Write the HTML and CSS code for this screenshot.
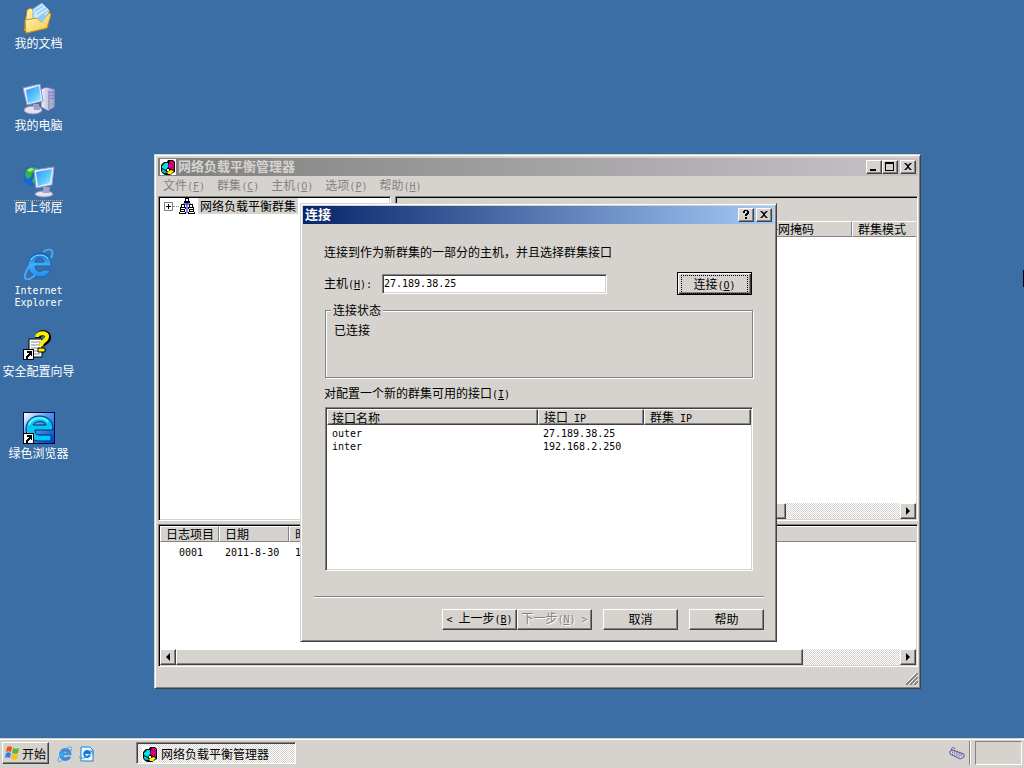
FILE: index.html
```html
<!DOCTYPE html>
<html lang="zh-CN">
<head>
<meta charset="utf-8">
<title>网络负载平衡管理器</title>
<link rel="stylesheet" href="styles.css">
</head>
<body>
<svg class="defs" aria-hidden="true">
  <defs>
    <linearGradient id="screen" x1="0" y1="0" x2="1" y2="1"><stop offset="0" stop-color="#2a94f4"/><stop offset=".6" stop-color="#62c8ff"/><stop offset="1" stop-color="#a8f0ff"/></linearGradient>
    <linearGradient id="folder" x1="0" y1="0" x2="1" y2="1"><stop offset="0" stop-color="#fff8b8"/><stop offset="1" stop-color="#f4c840"/></linearGradient>
    <linearGradient id="ieblue" x1="0" y1="0" x2="0" y2="1"><stop offset="0" stop-color="#1468c8"/><stop offset=".5" stop-color="#40b0f8"/><stop offset="1" stop-color="#1c8cf0"/></linearGradient>
    <linearGradient id="tile" x1="0" y1="0" x2="1" y2="1"><stop offset="0" stop-color="#ffffff"/><stop offset=".4" stop-color="#58a0f0"/><stop offset="1" stop-color="#0040c8"/></linearGradient>
    <linearGradient id="metal" x1="0" y1="0" x2="1" y2="0"><stop offset="0" stop-color="#f0f0fa"/><stop offset="1" stop-color="#9898d0"/></linearGradient>
    <symbol id="nlb" viewBox="0 0 16 16">
      <rect width="16" height="16" fill="#fff"/>
      <path d="M8 1h5l2 2v10l-2 1-3 2H5l-3-2-1-2V6l3-3h3z" fill="#000"/>
      <path d="M2 7l3-3h3v4L6 11 2 9z" fill="#00e4e8"/>
      <path d="M2 10l4 2 1 2H4l-2-1z" fill="#00c0c8"/>
      <path d="M9 4l1-2h3l1 2v7l-3-1-3-2z" fill="#e80078"/>
      <path d="M7 13l4-2 3 1-3 3H8z" fill="#fff000"/>
      <path d="M7 10h2v2H7z" fill="#fff"/>
      <path d="M10 4l1 1m1 0l1 1m-3 1l1 1m1 0l1 1" stroke="#700060"/>
    </symbol>
    <symbol id="ie" viewBox="0 0 32 32">
      <path d="M28 18C29 9 23 5 17 5 9 5 5 11 5 17c0 7 5 12 12 12 5 0 9-3 10-7h-7c-3 3-8 1-8-4zM12 14c1-5 8-5 9 0z" fill="url(#ieblue)" stroke="#2060a8" fill-rule="evenodd"/>
      <path d="M8 12c3-6 13-7 17-1" fill="none" stroke="#a0e0ff" stroke-width="1"/>
      <path d="M6 18C3 24 0 29 3 31c3 1 7-2 9-4M20 4c4-3 8-3 9-1 1 2 0 5-1 7" fill="none" stroke="#48a8f0" stroke-width="2"/>
    </symbol>
    <symbol id="shortcut" viewBox="0 0 11 11">
      <path d="M0 0h11v11H0z" fill="#000"/><path d="M1 1h9v9H1z" fill="#fff"/>
      <path d="M4 2h5v5H8V6H7v1H6v1H5v2H3V7h1V6h1V5h1V4H4z" fill="#000"/>
    </symbol>
  </defs>
</svg>

<main class="desktop">
  <nav class="icons">
    <a class="shortcut" href="#">
      <svg viewBox="0 0 32 32"><path d="M4 8l3-2 5 2v4L25 8l2 4-3 14-20 5-3-3z" fill="url(#folder)" stroke="#b07810"/><path d="M10 7l9-6 7 7v10l-8 7-8-9z" fill="#c8e8fc" stroke="#78b0e0"/><path d="M12 9l8-5m-6 8l9-6m-7 9l9-6" stroke="#80bce8"/><path d="M2 18l12-2 4 4 8-9 2 1-4 14-21 5z" fill="url(#folder)" stroke="#c89020"/><path d="M14 16l5 5 4-6-2-4z" fill="#90ccf4"/></svg>
      <span>我的文档</span>
    </a>
    <a class="shortcut" href="#">
      <svg viewBox="0 0 32 32"><path d="M18 5l5-2 9 2v18l-7 4-7-4z" fill="url(#metal)" stroke="#6868a8"/><path d="M26 7v18M27 9l4-1m-4 4l4-1m-4 4l4-1" stroke="#7878b8"/><path d="M28 19h2v2h-2z" fill="#60e040"/><ellipse cx="10" cy="26" rx="9" ry="4" fill="#e4e4f0" stroke="#9090b8"/><path d="M10 20h6l1 6h-6z" fill="#a0a0cc"/><path d="M0 4l17-4 3 17L4 21z" fill="#e8ecf8" stroke="#8898c8"/><path d="M3 6l13-4 2 14L5 19z" fill="url(#screen)"/></svg>
      <span>我的电脑</span>
    </a>
    <a class="shortcut focus" href="#">
      <svg viewBox="0 0 32 32"><circle cx="10" cy="10" r="10" fill="#1668d8"/><path d="M3 4l5-3 7 1-2 4-4 1-1 4-4 2-2-4zm8 7l5 0v7l-4 1-3-4z" fill="#38b838"/><path d="M4 4l4-2 3 1-4 3z" fill="#b0e878"/><ellipse cx="21" cy="28" rx="9" ry="3" fill="#e4e4f0" stroke="#9090b8"/><path d="M20 21h7l-1 6h-6z" fill="#a0a0cc"/><path d="M11 4l20-3-2 18-16 3z" fill="#e8ecf8" stroke="#8898c8"/><path d="M13 6l16-3-2 14-12 3z" fill="url(#screen)"/></svg>
      <span>网上邻居</span>
    </a>
    <a class="shortcut" href="#">
      <svg><use href="#ie"/></svg>
      <span class="lat">Internet Explorer</span>
    </a>
    <a class="shortcut" href="#">
      <svg viewBox="0 0 32 32"><path d="M6 9h13v18H6z" fill="#fff" stroke="#000"/><path d="M8 12h9m-9 3h9m-9 3h9m-9 3h9m-9 3h9" stroke="#888"/><path d="M15 8c0-7 11-6 10 0 0 4-6 4-6 8" fill="none" stroke="#000" stroke-width="6"/><path d="M14 7c0-5 11-5 10 0 0 4-6 4-6 9" fill="none" stroke="#ffef00" stroke-width="4"/><path d="M15 18h7v4h-7z" fill="#ffef00" stroke="#000"/><use href="#shortcut" y="19" width="11" height="11"/></svg>
      <span>安全配置向导</span>
    </a>
    <a class="shortcut" href="#">
      <svg viewBox="0 0 32 32"><path d="M0 0h32v32H0z" fill="#000840"/><path d="M1 1h30v30H1z" fill="url(#tile)"/><path d="M30 18C30 8 24 4 16 4 8 4 3 10 3 17c0 8 6 12 14 12h11v-6H16c-3 0-4-2-4-5zM10 13c2-4 12-5 13 0z" fill="#00c8f0" stroke="#002878" fill-rule="evenodd"/><path d="M6 13c3-8 14-9 19-3" fill="none" stroke="#60f0ff" stroke-width="2"/><use href="#shortcut" y="21" width="11" height="11"/></svg>
      <span>绿色浏览器</span>
    </a>
  </nav>

  <section class="window manager">
    <header class="titlebar inactive">
      <svg class="i16"><use href="#nlb"/></svg>
      <h1>网络负载平衡管理器</h1>
      <div class="pair">
        <button class="cap" aria-label="最小化"><svg viewBox="0 0 12 10"><path d="M2 7h6v2H2z"/></svg></button><button class="cap" aria-label="最大化"><svg viewBox="0 0 12 10"><path d="M1 0h9v9H1zM2 2v6h7V2z" fill-rule="evenodd"/></svg></button>
      </div>
      <button class="cap" aria-label="关闭"><svg viewBox="0 0 12 10"><path d="M2 1h2l2 2 2-2h2L7 4v1l3 3H8L6 6 4 8H2l3-3V4z"/></svg></button>
    </header>
    <nav class="menu">
      <button>文件<span class="lat">(<u>F</u>)</span></button>
      <button>群集<span class="lat">(<u>C</u>)</span></button>
      <button>主机<span class="lat">(<u>O</u>)</span></button>
      <button>选项<span class="lat">(<u>P</u>)</span></button>
      <button>帮助<span class="lat">(<u>H</u>)</span></button>
    </nav>
    <div class="panes">
      <div class="pane tree">
        <button class="expand" aria-label="展开"><svg viewBox="0 0 9 9"><path d="M0 0h9v9H0z" fill="#848284"/><path d="M1 1h7v7H1z" fill="#fff"/><path d="M2 4h5v1H2zM4 2h1v5H4z"/></svg></button>
        <i class="branch"></i>
        <svg class="i16" viewBox="0 0 16 16"><path d="M8 5v10M4 8V6h8v2" fill="none" stroke="#0000ff"/><path d="M6 0h4v3h1v2H5V3h1zM2 6h4v3h1v2H1V9h1zM10 6h4v3h1v2H9V9h1zM1 11h5v3h1v2H0v-2h1zM10 11h5v3h1v2H9v-2h1z"/><path d="M7 1h2v2H7zM3 7h2v2H3zm8 0h2v2h-2zM2 12h3v1H2zm9 0h3v1h-3zM1 14h5v1H1zm9 0h5v1h-5zM2 10h4v1H2zm8 0h4v1h-4z" fill="#fff"/></svg>
        <span class="node">网络负载平衡群集</span>
      </div>
      <div class="pane hosts">
        <div class="banner"></div>
        <table class="heads"><thead><tr><th class="mask">子网掩码</th><th class="mode">群集模式</th></tr></thead></table>
        <div class="scroll">
          <div class="thumb hostthumb"></div>
          <button class="arrow" aria-label="向右滚动"><svg viewBox="0 0 12 12"><path d="M4 2l4 4-4 4z"/></svg></button>
        </div>
      </div>
    </div>
    <div class="pane log">
      <table class="heads">
        <thead><tr><th class="c-id">日志项目</th><th class="c-date">日期</th><th>时间</th></tr></thead>
        <tbody><tr class="lat"><td class="num">0001</td><td>2011-8-30</td><td class="time">1</td></tr></tbody>
      </table>
      <div class="scroll">
        <button class="arrow" aria-label="向左滚动"><svg viewBox="0 0 12 12"><path d="M8 2L4 6l4 4z"/></svg></button>
        <div class="thumb logthumb"></div>
        <button class="arrow" aria-label="向右滚动"><svg viewBox="0 0 12 12"><path d="M4 2l4 4-4 4z"/></svg></button>
      </div>
    </div>
    <footer class="status"><svg viewBox="0 0 12 12"><path d="M0 12L12 0M4 12l8-8M8 12l4-4" stroke="#848284" stroke-width="2"/><path d="M-1 11L11-1M3 11l9-9M7 11l5-5" stroke="#fff"/></svg></footer>
  </section>

  <section class="window dialog" role="dialog" aria-label="连接">
    <header class="titlebar active">
      <h2>连接</h2>
      <button class="cap" aria-label="说明"><svg viewBox="0 0 12 10"><path d="M3 1h1V0h4v1h1v3H8v1H7v1H5V4h1V3h1V1H5v2H3zM5 7h2v2H5z"/></svg></button>
      <button class="cap" aria-label="关闭"><svg viewBox="0 0 12 10"><path d="M2 1h2l2 2 2-2h2L7 4v1l3 3H8L6 6 4 8H2l3-3V4z"/></svg></button>
    </header>
    <form class="body">
      <p class="intro">连接到作为新群集的一部分的主机，并且选择群集接口</p>
      <div class="host">
        <label for="host">主机<span class="lat">(<u>H</u>):</span></label>
        <input id="host" type="text" value="27.189.38.25">
        <button type="button" class="btn default"><span>连接<span class="lat">(<u>O</u>)</span></span></button>
      </div>
      <fieldset>
        <legend>连接状态</legend>
        <p>已连接</p>
      </fieldset>
      <p class="caption" id="ifs">对配置一个新的群集可用的接口<span class="lat">(<u>I</u>)</span></p>
      <div class="list">
        <table aria-labelledby="ifs">
          <thead><tr><th class="c-name">接口名称</th><th class="c-ip">接口<span class="lat"> IP</span></th><th>群集<span class="lat"> IP</span></th></tr></thead>
          <tbody class="lat">
            <tr><td>outer</td><td>27.189.38.25</td><td></td></tr>
            <tr><td>inter</td><td>192.168.2.250</td><td></td></tr>
          </tbody>
        </table>
      </div>
    </form>
    <footer class="actions">
      <div class="pair">
        <button class="btn"><span class="lat">&lt; </span>上一步<span class="lat">(<u>B</u>)</span></button>
        <button class="btn" disabled>下一步<span class="lat">(<u>N</u>) &gt;</span></button>
      </div>
      <button class="btn">取消</button>
      <button class="btn">帮助</button>
    </footer>
  </section>
  <i class="caret"></i>
</main>

<footer class="taskbar">
  <button class="btn start"><svg class="i16" viewBox="0 0 16 16"><path d="M3 2c2-1 3-1 5 0L7 7C5 6 4 6 2 7z" fill="#f05020"/><path d="M9 3c2 1 4 1 6 0l-1 5c-2 1-4 1-6 0z" fill="#58b830"/><path d="M2 8c2-1 3-1 5 0l-1 5c-2-1-3-1-5 0z" fill="#3878e8"/><path d="M8 9c2 1 4 1 6 0l-1 5c-2 1-4 1-6 0z" fill="#f8c010"/></svg>开始</button>
  <div class="quick">
    <button aria-label="Internet Explorer"><svg class="i16"><use href="#ie"/></svg></button>
    <button aria-label="Outlook Express"><svg class="i16" viewBox="0 0 16 16"><path d="M2 1h9l3 3v11H2z" fill="#e8f6ff" stroke="#2080d0"/><path d="M11 9a3 3 0 1 1 0-2H5" fill="none" stroke="#1878d0" stroke-width="2"/><path d="M0 11c4 3 9 0 13-6m-3 0h4v4" fill="none" stroke="#2898e8" stroke-width="1"/></svg></button>
  </div>
  <button class="task"><svg class="i16"><use href="#nlb"/></svg>网络负载平衡管理器</button>
  <div class="tray">
    <svg class="i16" viewBox="0 0 16 16"><path d="M1 6l3-1 11 4v3l-4 2L1 9z" fill="#d8d8f0" stroke="#585888"/><path d="M3 7l10 4M5 6l9 4M3 9l8 3" stroke="#484878" stroke-dasharray="1 1"/><path d="M3 5c-2-3 3-3 3-1" fill="none" stroke="#585888"/></svg>
    <i class="rule"></i>
    <div class="clock"></div>
  </div>
</footer>
</body>
</html>
```
FILE: styles.css
```css
:root {
  --face: #d6d3ce;
  --shade: #848284;
  --dark: #424142;
}
* { box-sizing: border-box; }
body {
  margin: 0;
  height: 100vh;
  display: flex;
  flex-direction: column;
  overflow: hidden;
  background: #3a6ea5;
  color: #000;
  font: 12px/14px "Noto Sans CJK SC", sans-serif;
}
h1, h2, p { margin: 0; }
button, input { font: inherit; color: inherit; padding: 0; }
button { border: 0; background: none; }
svg { display: block; flex: none; overflow: hidden; }
table { border-collapse: separate; border-spacing: 0; table-layout: fixed; width: 100%; }
th, td { text-align: left; font-weight: normal; white-space: nowrap; }
.lat { font-family: "DejaVu Sans Mono", monospace; font-size: 10px; white-space: pre; }
.defs { position: absolute; width: 0; height: 0; }
.i16 { width: 16px; height: 16px; }
.pair { display: flex; }

.desktop { position: relative; flex: 1; min-height: 0; }
.icons { display: grid; grid-auto-rows: 82px; width: 77px; padding-top: 2px; }
.shortcut {
  display: flex;
  flex-direction: column;
  align-items: center;
  gap: 2px;
  color: #fff;
  text-align: center;
  text-decoration: none;
}
.shortcut svg { width: 32px; height: 32px; }
.shortcut span { white-space: nowrap; }
.shortcut .lat { white-space: normal; line-height: 12px; width: 60px; padding-top: 3px; }
.focus span { border-top: 1px dotted #e0a060; line-height: 12px; }

.window {
  position: absolute;
  display: flex;
  flex-direction: column;
  background: var(--face);
  border: 1px solid;
  border-color: var(--face) var(--dark) var(--dark) var(--face);
  box-shadow: inset 1px 1px #fff, inset -1px -1px var(--shade);
}
.manager { left: 154px; top: 154px; right: 103px; bottom: 49px; padding: 3px 2px 3px 3px; }
.dialog { left: 300px; top: 203px; right: 247px; padding: 2px; }

.titlebar { display: flex; align-items: center; gap: 2px; height: 18px; padding: 0 2px; }
.titlebar h1, .titlebar h2 { flex: 1; font-size: 13px; line-height: 16px; padding-bottom: 2px; font-weight: bold; }
.inactive { background: linear-gradient(90deg, #808080, #c6c3c6); color: var(--face); }
.active { background: linear-gradient(90deg, #08246b, #a5cbf7); color: #fff; }
.cap, .arrow, .thumb, .btn {
  background: var(--face);
  border: 1px solid;
  border-color: #fff var(--dark) var(--dark) #fff;
  box-shadow: inset -1px -1px var(--shade);
}
.cap { width: 16px; height: 14px; }
.cap svg { width: 12px; height: 10px; margin: 1px; }

.menu { display: flex; gap: 12px; height: 20px; padding-left: 5px; color: var(--shade); }

.pane {
  display: flex;
  flex-direction: column;
  min-width: 0;
  padding: 1px;
  background: #fff;
  border: 1px solid;
  border-color: var(--shade) #fff #fff var(--shade);
  box-shadow: inset 1px 1px #000, inset -1px -1px var(--face);
}
.panes { flex: 1; min-height: 0; display: grid; grid-template-columns: 233px 1fr; gap: 4px; }
.tree { flex-direction: row; align-items: flex-start; padding: 1px 5px; }
.expand { width: 9px; height: 9px; margin-top: 4px; }
.expand svg { width: 9px; height: 9px; }
.branch { width: 6px; height: 9px; border-bottom: 1px dotted var(--shade); }
.node { margin-left: 3px; padding: 0 2px; line-height: 16px; background: var(--face); }
.banner { height: 23px; background: var(--face); }
.heads th {
  height: 16px;
  padding: 0 5px 1px;
  background: var(--face);
  border: 1px solid;
  border-color: #fff var(--shade) var(--shade) #fff;
  line-height: 13px;
}
.heads th:last-child { border-right: 0; }
.hosts .heads .mask { padding-right: 37px; text-align: right; }
.hosts .heads .mode { width: 64px; padding-right: 0; }
.scroll {
  display: flex;
  height: 16px;
  margin-top: auto;
  background: repeating-conic-gradient(#fff 0 25%, var(--face) 0 50%) 0 0 / 2px 2px;
}
.arrow { width: 16px; height: 16px; }
.arrow svg { width: 12px; height: 12px; margin: 1px; }
.arrow:last-child { margin-left: auto; }
.thumb { height: 16px; }
.hostthumb { width: 75%; }
.logthumb { width: 83%; }

.log { height: 143px; margin-top: 3px; }
.log .c-id { width: 59px; }
.log .c-date { width: 70px; }
.log td { height: 22px; padding: 0 6px; vertical-align: middle; }
.log .num { padding: 0 0 0 19px; }
.status { display: flex; justify-content: flex-end; align-items: flex-end; height: 18px; }
.status svg { width: 12px; height: 12px; }

.body { padding: 21px 21px 0 22px; }
.intro, .host label, .caption { margin-left: -1px; }
.host { display: flex; align-items: center; margin-top: 13px; height: 23px; }
.host label { width: 58px; }
.host input {
  flex: 0 1 225px;
  min-width: 0;
  height: 20px;
  padding: 0 1px 1px;
  font: 10px "DejaVu Sans Mono", monospace;
  background: #fff;
  border: 1px solid;
  border-color: var(--shade) #fff #fff var(--shade);
  box-shadow: inset 1px 1px var(--dark), inset -1px -1px var(--face);
  outline: 0;
}
.btn { width: 75px; height: 21px; padding-bottom: 2px; line-height: 15px; white-space: nowrap; }
.btn:disabled { color: var(--shade); text-shadow: 1px 1px #fff; }
.default {
  height: 23px;
  margin: 0 1px 0 auto;
  padding: 2px;
  border-color: #000;
  box-shadow: inset 1px 1px #fff, inset -1px -1px var(--dark), inset -2px -2px var(--shade);
}
.default > span { display: block; margin: 0 1px; border: 1px dotted #000; }
fieldset {
  margin: 8px 0 0;
  padding: 6px 8px 0;
  min-height: 75px;
  border: 1px solid var(--shade);
  box-shadow: inset 1px 1px #fff, 1px 1px #fff;
}
legend { padding: 0 2px; margin-left: -3px; background: var(--face); }
.caption { margin-top: 8px; }
.list {
  height: 164px;
  margin-top: 5px;
  padding: 1px;
  background: #fff;
  border: 1px solid;
  border-color: var(--shade) #fff #fff var(--shade);
  box-shadow: inset 1px 1px var(--dark), inset -1px -1px var(--face);
}
.list th {
  height: 16px;
  padding: 0 5px;
  line-height: 13px;
  background: var(--face);
  border: 1px solid;
  border-color: #fff var(--dark) var(--dark) #fff;
  box-shadow: inset -1px -1px var(--shade);
}
.list th .lat { line-height: 10px; }
.list td { height: 13px; line-height: 13px; padding: 0 5px; }
.list tbody::before { content: ""; display: block; height: 2px; }
.list .c-name { width: 211px; padding-left: 4px; }
.c-ip { width: 106px; }
.actions {
  display: flex;
  justify-content: flex-end;
  gap: 11px;
  margin: 25px 10px 9px 11px;
  padding-top: 12px;
  border-top: 1px solid var(--shade);
  box-shadow: inset 0 1px #fff;
}

.caret { position: absolute; right: 0; top: 270px; width: 1px; height: 17px; background: #000; }

.taskbar {
  display: flex;
  align-items: center;
  height: 30px;
  padding: 0 2px;
  background: var(--face);
  box-shadow: inset 0 1px var(--face), inset 0 2px #fff;
}
.start { display: flex; align-items: center; gap: 2px; width: 47px; height: 22px; padding: 0 1px; }
.quick { display: flex; gap: 6px; margin: 2px 41px 0 8px; }
.task {
  display: flex;
  align-items: center;
  gap: 3px;
  width: 160px;
  height: 22px;
  padding: 1px 5px 0;
  border: 1px solid;
  border-color: var(--shade) #fff #fff var(--shade);
  box-shadow: inset 1px 1px var(--dark);
  background: repeating-conic-gradient(#fff 0 25%, var(--face) 0 50%) 0 0 / 2px 2px;
}
.tray { display: flex; align-items: center; gap: 4px; margin-left: auto; }
.rule { width: 2px; height: 24px; border-left: 1px solid var(--shade); border-right: 1px solid #fff; }
.clock { width: 47px; height: 24px; border: 1px solid; border-color: var(--shade) #fff #fff var(--shade); }
```
